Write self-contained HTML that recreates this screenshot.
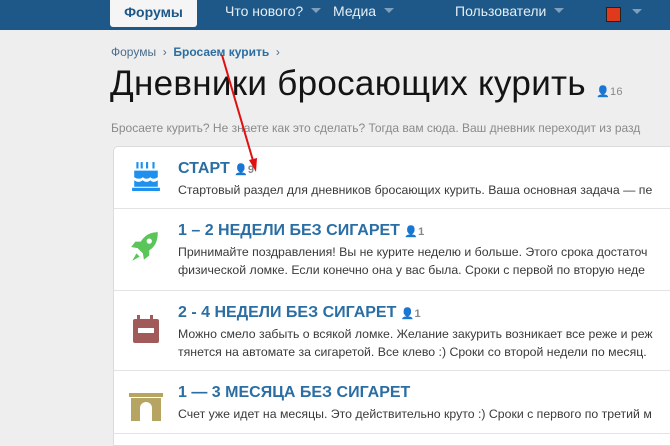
<!DOCTYPE html>
<html><head><meta charset="utf-8"><style>
*{margin:0;padding:0;box-sizing:border-box}
body{width:670px;height:437px;overflow:hidden;background:#eeeeee;font-family:"Liberation Sans",sans-serif;position:relative}
.nav{position:absolute;left:0;top:0;width:670px;height:30px;background:#1d5888}
.nav span{position:absolute;top:3px;font-size:14px;color:#e5eef6;white-space:nowrap}
.tab{position:absolute;left:110px;top:0;width:87px;height:27px;background:#f5f5f5;border-radius:0 0 3px 3px;color:#1d5888;font-weight:bold;font-size:14px;text-align:center;line-height:24px}
.tri{display:inline-block;width:0;height:0;border-left:5px solid transparent;border-right:5px solid transparent;border-top:5px solid #7f9fbf;margin-left:8px;vertical-align:3px}
.bc{position:absolute;left:111px;top:45px;font-size:12px;color:#4a6d8c}
.bc b{color:#2d6ea1}
h1{position:absolute;left:110px;top:64px;font-size:35px;font-weight:normal;color:#141414;letter-spacing:0.3px;white-space:nowrap}
.desc{position:absolute;left:111px;top:121px;font-size:12px;color:#8a8a8a;white-space:nowrap}
.card{position:absolute;left:113px;top:146px;width:600px;height:300px;background:#fff;border:1px solid #dcdcdc;border-radius:5px 0 0 0}
.row{position:absolute;left:0;width:600px;border-bottom:1px solid #e3e3e3}
.row .t{position:absolute;left:64px;font-size:16px;font-weight:bold;color:#2a6ea3;white-space:nowrap}
.row .d{position:absolute;left:64px;font-size:12.3px;color:#3a3a3a;line-height:18px;white-space:nowrap}
.cnt{font-size:11px;color:#888;font-weight:bold}
.ic{position:absolute}
</style></head><body>
<div class="nav">
<div class="tab">Форумы</div>
<span style="left:225px">Что нового?<i class="tri"></i></span>
<span style="left:333px">Медиа<i class="tri"></i></span>
<span style="left:455px">Пользователи<i class="tri"></i></span>
<span style="left:606px;top:7px;width:15px;height:15px;background:#e03a1c;border:1px solid #222"></span>
<span style="left:632px;top:4px"><i class="tri" style="margin:0"></i></span>
</div>
<div class="bc">Форумы &nbsp;›&nbsp; <b>Бросаем курить</b> &nbsp;›</div>
<h1>Дневники бросающих курить <span style="font-size:11px;color:#888">👤16</span></h1>
<div class="desc">Бросаете курить? Не знаете как это сделать? Тогда вам сюда. Ваш дневник переходит из разд</div>
<div class="card">
<div class="row" style="top:0;height:62px">
<svg class="ic" style="left:17px;top:12px" width="30" height="34" viewBox="0 0 28 30"><g fill="#1e90ee"><rect x="5" y="2" width="2" height="6"/><rect x="9" y="2" width="2" height="6"/><rect x="14" y="2" width="2" height="6"/><rect x="20" y="2" width="2" height="6"/><path d="M3 10h22v6c-3 2-5 2-7 0-2 2-5 2-7 0-2 2-5 2-8 0z"/><path d="M3 19c3 2 5 2 8 0 2 2 5 2 7 0 2 2 4 2 7 0v6H3z"/><rect x="1" y="26" width="26" height="3"/></g></svg>
<div class="t" style="top:13px">СТАРТ <span class="cnt">👤9</span></div>
<div class="d" style="top:34px">Стартовый раздел для дневников бросающих курить. Ваша основная задача — пе</div>
</div>
<div class="row" style="top:62px;height:82px">
<svg class="ic" style="left:16px;top:22px" width="30" height="32" viewBox="0 0 28 30"><path fill="#5cc55a" d="M26 1c-8 0-13 4-16 9H5l-4 5 6 1 5 5 1 6 5-4v-5c5-3 8-8 8-17zM18 7a2.5 2.5 0 1 1 0 5 2.5 2.5 0 0 1 0-5zM6 21l-4 7 7-4z"/></svg>
<div class="t" style="top:13px">1 – 2 НЕДЕЛИ БЕЗ СИГАРЕТ <span class="cnt">👤1</span></div>
<div class="d" style="top:34px">Принимайте поздравления! Вы не курите неделю и больше. Этого срока достаточ<br>физической ломке. Если конечно она у вас была. Сроки с первой по вторую неде</div>
</div>
<div class="row" style="top:144px;height:80px">
<svg class="ic" style="left:18px;top:22px" width="28" height="32" viewBox="0 0 28 30"><path fill="#a15a5a" d="M5 1h3v4h10V1h3v4h4a2 2 0 0 1 2 2v20a2 2 0 0 1-2 2H3a2 2 0 0 1-2-2V7a2 2 0 0 1 2-2h2zM6 14v5h16v-5z"/></svg>
<div class="t" style="top:13px">2 - 4 НЕДЕЛИ БЕЗ СИГАРЕТ <span class="cnt">👤1</span></div>
<div class="d" style="top:34px">Можно смело забыть о всякой ломке. Желание закурить возникает все реже и реж<br>тянется на автомате за сигаретой. Все клево :) Сроки со второй недели по месяц.</div>
</div>
<div class="row" style="top:224px;height:63px">
<svg class="ic" style="left:15px;top:22px" width="34" height="28" viewBox="0 0 34 28"><path fill="#b5a462" d="M0 0h34v4H0zM2 5h30v23h-9V15a6 6 0 0 0-12 0v13H2z"/></svg>
<div class="t" style="top:13px">1 — 3 МЕСЯЦА БЕЗ СИГАРЕТ</div>
<div class="d" style="top:34px">Счет уже идет на месяцы. Это действительно круто :) Сроки с первого по третий м</div>
</div>
</div>
<svg style="position:absolute;left:0;top:0" width="670" height="437"><line x1="222" y1="55" x2="254" y2="164" stroke="#e01010" stroke-width="2"/><path d="M249 160l7 12 1-14z" fill="#e01010"/></svg>
</body></html>
